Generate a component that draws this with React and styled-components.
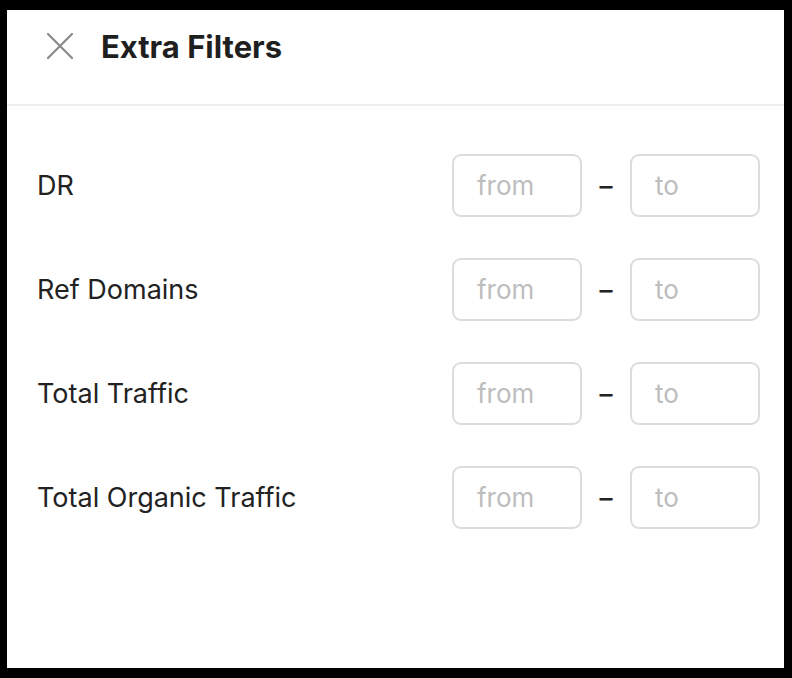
import React from 'react';
import styled, { createGlobalStyle } from 'styled-components';

const filters = ['DR', 'Ref Domains', 'Total Traffic', 'Total Organic Traffic'];

const ExtraFilters = () => {
  return (
    <>
      <GlobalStyle />
      <Panel>
        <Header>
          <CloseButton aria-label="close">
            <svg width="26" height="26" viewBox="0 0 26 26">
              <path d="M1 1 L25 25 M25 1 L1 25" stroke="#8a8a8a" strokeWidth="2.2" strokeLinecap="round" />
            </svg>
          </CloseButton>
          <Title>Extra Filters</Title>
        </Header>
        <Body>
          {filters.map((name) => (
            <Row key={name}>
              <Label>{name}</Label>
              <Range>
                <RangeInput placeholder="from" />
                <Dash>–</Dash>
                <RangeInput placeholder="to" />
              </Range>
            </Row>
          ))}
        </Body>
      </Panel>
    </>
  );
};

export default ExtraFilters;

const GlobalStyle = createGlobalStyle`
  html, body {
    margin: 0;
    padding: 0;
    background: #000;
  }
  body {
    font-family: Inter, "Noto Sans", sans-serif;
  }
`;

const Panel = styled.div`
  margin: 10px 8px 10px 7px;
  height: 658px;
  background-color: #fff;
  display: flex;
  flex-direction: column;
`;

const Header = styled.div`
  height: 96px;
  box-sizing: border-box;
  border-bottom: 2px solid #eeeeee;
  display: flex;
  align-items: center;
  padding: 0 0 22px 40px;
`;

const CloseButton = styled.button`
  border: none;
  background: none;
  padding: 0;
  width: 26px;
  height: 26px;
  display: flex;
  cursor: pointer;
`;

const Title = styled.h1`
  margin: 0 0 0 28px;
  font-size: 31px;
  font-weight: 700;
  color: #1f1f1f;
`;

const Body = styled.div`
  display: flex;
  flex-direction: column;
  gap: 41px;
  padding: 48px 24px 0 30px;
`;

const Row = styled.div`
  display: flex;
  align-items: center;
  justify-content: space-between;
  height: 63px;
`;

const Label = styled.div`
  font-size: 27px;
  color: #222;
`;

const Range = styled.div`
  display: flex;
  align-items: center;
`;

const RangeInput = styled.input`
  width: 130px;
  height: 63px;
  box-sizing: border-box;
  border: 2px solid #dcdcdc;
  border-radius: 9px;
  outline: none;
  padding: 0 0 0 23px;
  font-family: Inter, sans-serif;
  font-size: 26px;
  color: #222;
  &::placeholder {
    color: #bdbdbd;
  }
`;

const Dash = styled.span`
  width: 48px;
  text-align: center;
  font-size: 26px;
  font-weight: 500;
  color: #222;
`;
